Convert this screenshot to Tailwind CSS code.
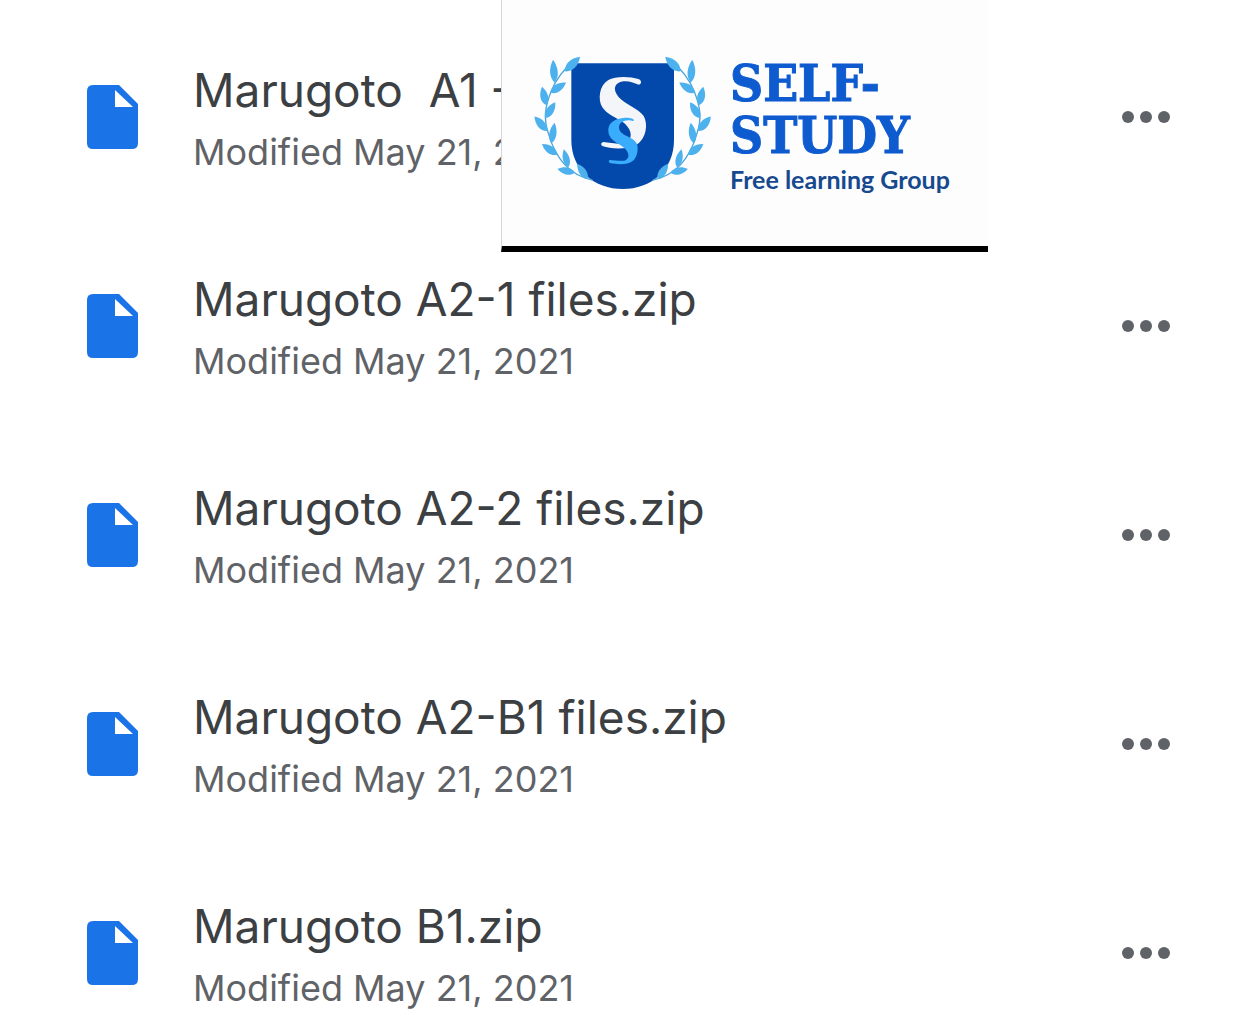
<!DOCTYPE html>
<html lang="en">
<head>
<meta charset="utf-8">
<meta name="viewport" content="width=device-width, initial-scale=1">
<title>Marugoto files</title>
<script src="https://cdn.jsdelivr.net/npm/@tailwindcss/browser@4"></script>
</head>
<body class="bg-white font-['Inter',sans-serif]">
<svg class="hidden" aria-hidden="true">
  <symbol id="file" viewBox="0 0 51 64">
    <path fill="#1b73e8" d="M6 0H32L51 19V58Q51 64 45 64H6Q0 64 0 58V6Q0 0 6 0Z"/>
    <path fill="#fff" d="M28 5V22H46Z"/>
  </symbol>
  <symbol id="dots" viewBox="0 0 50 14">
    <g fill="#5f6368"><circle cx="7" cy="7" r="6"/><circle cx="25" cy="7" r="6"/><circle cx="43" cy="7" r="6"/></g>
  </symbol>
</svg>
<main class="relative h-screen overflow-hidden pt-3">
  <ul>
    <li class="flex h-[209px] items-center pr-[71px] pl-[87px]">
      <svg class="h-16 w-[51px] shrink-0"><use href="#file"/></svg>
      <div class="ml-[55px] min-w-0 grow pt-2">
        <h2 class="text-[46px] leading-[62px] whitespace-pre text-[#3c4043]">Marugoto  A1 - files.zip</h2>
        <p class="text-[36px] leading-[62px] text-[#5f6368]">Modified May 21, 2021</p>
      </div>
      <button type="button" aria-label="More options" class="shrink-0"><svg class="h-[14px] w-[50px]"><use href="#dots"/></svg></button>
    </li>
    <li class="flex h-[209px] items-center pr-[71px] pl-[87px]">
      <svg class="h-16 w-[51px] shrink-0"><use href="#file"/></svg>
      <div class="ml-[55px] min-w-0 grow pt-2">
        <h2 class="text-[46px] leading-[62px] whitespace-pre text-[#3c4043]">Marugoto A2-1 files.zip</h2>
        <p class="text-[36px] leading-[62px] text-[#5f6368]">Modified May 21, 2021</p>
      </div>
      <button type="button" aria-label="More options" class="shrink-0"><svg class="h-[14px] w-[50px]"><use href="#dots"/></svg></button>
    </li>
    <li class="flex h-[209px] items-center pr-[71px] pl-[87px]">
      <svg class="h-16 w-[51px] shrink-0"><use href="#file"/></svg>
      <div class="ml-[55px] min-w-0 grow pt-2">
        <h2 class="text-[46px] leading-[62px] whitespace-pre text-[#3c4043]">Marugoto A2-2 files.zip</h2>
        <p class="text-[36px] leading-[62px] text-[#5f6368]">Modified May 21, 2021</p>
      </div>
      <button type="button" aria-label="More options" class="shrink-0"><svg class="h-[14px] w-[50px]"><use href="#dots"/></svg></button>
    </li>
    <li class="flex h-[209px] items-center pr-[71px] pl-[87px]">
      <svg class="h-16 w-[51px] shrink-0"><use href="#file"/></svg>
      <div class="ml-[55px] min-w-0 grow pt-2">
        <h2 class="text-[46px] leading-[62px] whitespace-pre text-[#3c4043]">Marugoto A2-B1 files.zip</h2>
        <p class="text-[36px] leading-[62px] text-[#5f6368]">Modified May 21, 2021</p>
      </div>
      <button type="button" aria-label="More options" class="shrink-0"><svg class="h-[14px] w-[50px]"><use href="#dots"/></svg></button>
    </li>
    <li class="flex h-[209px] items-center pr-[71px] pl-[87px]">
      <svg class="h-16 w-[51px] shrink-0"><use href="#file"/></svg>
      <div class="ml-[55px] min-w-0 grow pt-2">
        <h2 class="text-[46px] leading-[62px] whitespace-pre text-[#3c4043]">Marugoto B1.zip</h2>
        <p class="text-[36px] leading-[62px] text-[#5f6368]">Modified May 21, 2021</p>
      </div>
      <button type="button" aria-label="More options" class="shrink-0"><svg class="h-[14px] w-[50px]"><use href="#dots"/></svg></button>
    </li>
  </ul>

  <!-- Group banner lying over the list -->
  <aside class="absolute top-0 left-[501px] flex h-[252px] w-[487px] items-start border-b-6 border-l border-b-black border-l-gray-300 bg-[#fdfdfd] pt-14 pl-8">
    <svg class="h-[134px] w-[178px] shrink-0" viewBox="117 168 534 402" role="img" aria-label="Self-Study crest">
      <path fill="#0349ab" d="M229 190H537V420C537 510 468 567 383 567C298 567 229 510 229 420Z"/>
      <defs>
        <path id="leaf" d="M0 0C-18 -15 -18 -42 0 -66C18 -42 18 -15 0 0Z"/>
        <g id="branch" fill="#4db1ee">
          <path fill="none" stroke="#4aa5dc" stroke-width="4" d="M240 180C215 200 185 232 168 275C150 320 145 355 160 400C180 470 220 525 292 540"/>
          <use href="#leaf" transform="translate(210 214) rotate(46) scale(.95)"/>
          <use href="#leaf" transform="translate(179 248) rotate(-4) scale(.85 1.04)"/>
          <use href="#leaf" transform="translate(166 278) rotate(57) scale(.85)"/>
          <use href="#leaf" transform="translate(153 315) rotate(-12) scale(.85)"/>
          <use href="#leaf" transform="translate(151 354) rotate(32) scale(.85)"/>
          <use href="#leaf" transform="translate(156 393) rotate(-41) scale(.87)"/>
          <use href="#leaf" transform="translate(169 430) rotate(9) scale(.8 .95)"/>
          <use href="#leaf" transform="translate(187 464) rotate(-55) scale(.85)"/>
          <use href="#leaf" transform="translate(220 502) rotate(-14) scale(.75 .85)"/>
          <use href="#leaf" transform="translate(239 518) rotate(-78) scale(.8)"/>
          <use href="#leaf" transform="translate(278 538) rotate(-34) scale(.8 .85)"/>
        </g>
      </defs>
      <use href="#branch"/>
      <use href="#branch" transform="translate(766 0) scale(-1 1)"/>
      <path fill="#f4f5f8" d="M432 254C440 252 441 241 430 237C405 229 360 228 340 240C312 256 308 300 322 322C335 342 360 352 380 364C410 384 414 412 398 426C385 438 345 427 326 426C317 427 316 436 324 439C345 446 395 450 425 434C454 416 460 372 446 348C430 324 388 312 370 290C352 268 358 248 385 244C402 242 420 250 432 254Z"/>
      <path fill="#39adfb" d="M416 362C420 356 400 352 385 354C358 356 338 370 340 394C342 424 376 430 392 448C405 464 402 478 388 482C375 484 355 480 345 480C339 482 341 489 348 490C370 494 400 494 412 484C428 472 432 442 424 428C411 408 375 408 372 384C371 368 385 362 400 361C408 361 412 364 416 362Z"/>
    </svg>
    <div class="ml-[18px] pt-px">
      <p class="font-['DejaVu_Serif_Condensed','DejaVu_Serif',serif] text-[51px] leading-[52px] font-bold text-[#0e5bd0] [-webkit-text-stroke:1px_#0e5bd0]">SELF-<br>STUDY</p>
      <p class="font-['Lato',sans-serif] text-[25px] leading-[36px] font-bold whitespace-nowrap text-[#17498f]">Free learning Group</p>
    </div>
  </aside>
</main>
</body>
</html>
